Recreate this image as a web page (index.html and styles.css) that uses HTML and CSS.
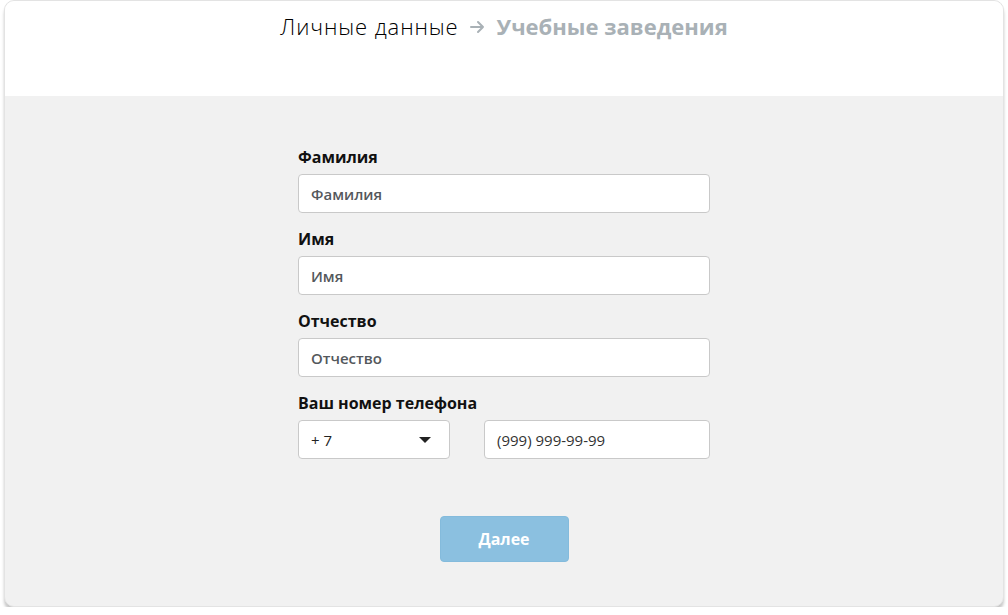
FILE: index.html
```html
<!DOCTYPE html>
<html lang="ru">
<head>
<meta charset="utf-8">
<title>Регистрация</title>
<link rel="stylesheet" href="styles.css">
</head>
<body>
<div class="card">
  <header class="steps">
    <span class="step step-active">Личные данные</span>
    <svg class="step-arrow" width="16" height="14" viewBox="0 0 16 14" aria-hidden="true">
      <path d="M1 7h12M8 2l5 5-5 5" fill="none" stroke="currentColor" stroke-width="2" stroke-linecap="round" stroke-linejoin="round"/>
    </svg>
    <span class="step step-next">Учебные заведения</span>
  </header>
  <main class="body">
    <form class="form">
      <label class="field">
        <span class="field-label">Фамилия</span>
        <input class="input" type="text" placeholder="Фамилия">
      </label>
      <label class="field">
        <span class="field-label">Имя</span>
        <input class="input" type="text" placeholder="Имя">
      </label>
      <label class="field">
        <span class="field-label">Отчество</span>
        <input class="input" type="text" placeholder="Отчество">
      </label>
      <div class="field">
        <span class="field-label">Ваш номер телефона</span>
        <div class="phone">
          <div class="select">
            <span>+ 7</span>
            <svg width="12" height="6" viewBox="0 0 12 6" aria-hidden="true"><path d="M0 0h12L6 6z" fill="#222"/></svg>
          </div>
          <input class="input phone-input" type="text" placeholder="(999) 999-99-99">
        </div>
      </div>
      <div class="actions">
        <button class="btn" type="button">Далее</button>
      </div>
    </form>
  </main>
</div>
</body>
</html>
```
FILE: styles.css
```css
* { box-sizing: border-box; }

html, body {
  margin: 0;
  background: #ffffff;
  font-family: "Open Sans", "Noto Sans", sans-serif;
}

.card {
  margin: 0 4px;
  height: 607px;
  border: 1px solid #e3e3e3;
  border-radius: 10px;
  overflow: hidden;
  background: #f1f1f1;
  box-shadow: 0 4px 3px rgba(0, 0, 0, 0.22);
  display: flex;
  flex-direction: column;
}

.steps {
  height: 95px;
  background: #ffffff;
  display: flex;
  justify-content: center;
  align-items: flex-start;
  gap: 11px;
  padding-top: 10px;
}

.step {
  font-size: 22px;
  line-height: 30px;
}

.step-active {
  color: #000;
  font-weight: 300;
  letter-spacing: 0.9px;
}

.step-next {
  color: #a9b1b6;
  font-weight: 700;
}

.step-arrow {
  color: #a9b1b6;
  margin-top: 9px;
}

.body {
  flex: 1;
  display: flex;
  justify-content: center;
  padding-top: 51px;
}

.form {
  width: 412px;
  display: flex;
  flex-direction: column;
  gap: 16px;
}

.field {
  display: flex;
  flex-direction: column;
  gap: 6px;
}

.field-label {
  font-size: 16px;
  font-weight: 700;
  color: #111;
  line-height: 21px;
}

.input, .select {
  height: 39px;
  border: 1px solid #c9c9c9;
  border-radius: 4px;
  background: #fff;
  font-family: inherit;
  font-size: 15px;
  font-weight: 600;
  padding: 0 12px;
  color: #333;
}

.input::placeholder {
  color: #54585c;
  opacity: 1;
}

.phone {
  display: flex;
  gap: 34px;
}

.select {
  width: 152px;
  flex: none;
  display: flex;
  align-items: center;
  justify-content: space-between;
  padding-right: 18px;
  color: #222;
  font-weight: 400;
}

.phone-input {
  flex: 1;
  min-width: 0;
}

.phone-input::placeholder {
  color: #333;
  font-weight: 400;
}

.actions {
  display: flex;
  justify-content: center;
  padding-top: 41px;
}

.btn {
  width: 129px;
  height: 46px;
  border: 1px solid #84bbdc;
  border-radius: 4px;
  background: #8bc0e0;
  color: #fff;
  font-family: inherit;
  font-size: 16px;
  font-weight: 700;
}
```
